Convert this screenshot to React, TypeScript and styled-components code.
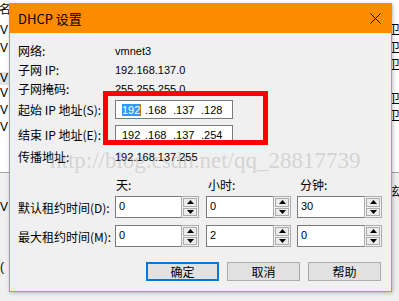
import React from "react"
import styled, { createGlobalStyle } from "styled-components"

const GlobalStyle = createGlobalStyle`
  html, body {
    margin: 0;
    padding: 0;
    background: #ffffff;
  }
  body {
    font-family: "Noto Sans CJK SC", "Liberation Sans", sans-serif;
    font-size: 12px;
    color: #000000;
  }
`

const Desktop = styled.div`
  position: relative;
  width: 399px;
  height: 301px;
  overflow: hidden;
  background: #f0f0f0;
  display: flex;
  flex-direction: column;
`

const BgTop = styled.div`
  height: 172px;
  background: #ffffff;
  border-bottom: 1px solid #a0a0a0;
  display: flex;
  justify-content: space-between;
`

const BgColumn = styled.div`
  width: 9px;
  display: flex;
  flex-direction: column;
  font-family: "Liberation Sans", "Noto Sans CJK SC", sans-serif;
  font-size: 12px;
  overflow: hidden;
`

const BgCell = styled.div<{ $h: number; $shade?: boolean; $shift?: number }>`
  height: ${(p) => p.$h}px;
  line-height: ${(p) => p.$h}px;
  background: ${(p) => (p.$shade ? "#e5e5e5" : "transparent")};
  white-space: nowrap;
  text-indent: ${(p) => p.$shift ?? 0}px;
`

const BgBottom = styled.div`
  flex: 1;
  display: flex;
  justify-content: space-between;
`

const Dialog = styled.div`
  position: absolute;
  left: 9px;
  top: 3px;
  width: 383px;
  height: 289px;
  box-sizing: border-box;
  border: 1px solid #ff8c00;
  border-top: none;
  background: #f0f0f0;
  box-shadow: 1px 1px 4px rgba(0, 0, 0, 0.25);
  display: flex;
  flex-direction: column;
`

const TitleBar = styled.div`
  height: 30px;
  margin: 0 -1px;
  background: #ff8c00;
  display: flex;
  align-items: center;
  justify-content: space-between;
  padding: 0 11px 0 9px;
`

const Title = styled.span`
  font-size: 13px;
  line-height: 30px;
  padding-top: 1px;
`

const Body = styled.div`
  position: relative;
  flex: 1;
  padding: 8px 10px 0 8px;
  display: flex;
  flex-direction: column;
`

const Row = styled.div<{ $h: number; $top?: number }>`
  height: ${(p) => p.$h}px;
  margin-top: ${(p) => p.$top ?? 0}px;
  display: flex;
  align-items: center;
`

const Label = styled.span`
  width: 97px;
  flex: none;
  white-space: nowrap;
  font-size: 12px;
`

const Value = styled.span`
  font-family: "Liberation Sans", sans-serif;
  font-size: 11px;
`

const IpBox = styled.div`
  width: 118px;
  height: 19px;
  box-sizing: border-box;
  border: 1px solid #7a7a7a;
  background: #ffffff;
  display: flex;
  align-items: center;
  padding-left: 6px;
  font-family: "Liberation Sans", sans-serif;
  font-size: 11px;
`

const IpPart = styled.span<{ $w: number }>`
  width: ${(p) => p.$w}px;
  flex: none;
  display: flex;
  align-items: center;
`

const Selected = styled.span`
  background: #3399ff;
  color: #ffffff;
  height: 12px;
  line-height: 12px;
  border-right: 1px solid #c87a1e;
`

const HeadCell = styled.span<{ $w: number }>`
  width: ${(p) => p.$w}px;
  flex: none;
  padding-left: 1px;
`

const Spin = styled.div<{ $w: number }>`
  width: ${(p) => p.$w}px;
  flex: none;
  height: 100%;
  display: flex;
`

const SpinField = styled.div`
  flex: 1;
  box-sizing: border-box;
  border: 1px solid #7a7a7a;
  border-right: none;
  background: #ffffff;
  font-family: "Liberation Sans", sans-serif;
  font-size: 11px;
  padding: 3px 0 0 3px;
`

const SpinButtons = styled.div`
  width: 18px;
  box-sizing: border-box;
  border: 1px solid #adadad;
  background: #f0f0f0;
  display: flex;
  flex-direction: column;
  gap: 1px;
  padding: 1px;
`

const SpinButton = styled.div`
  flex: 1;
  box-sizing: border-box;
  border: 1px solid #adadad;
  background: #ececec;
  display: flex;
  align-items: center;
  justify-content: center;
`

const Gap = styled.div<{ $w: number }>`
  width: ${(p) => p.$w}px;
  flex: none;
`

const ButtonRow = styled.div`
  margin-top: 15px;
  height: 19px;
  display: flex;
  justify-content: flex-end;
  gap: 8px;
`

const Button = styled.div<{ $primary?: boolean }>`
  width: 73px;
  box-sizing: border-box;
  border: ${(p) => (p.$primary ? "2px solid #0078d7" : "1px solid #adadad")};
  background: #e1e1e1;
  display: flex;
  align-items: center;
  justify-content: center;
  font-size: 12px;
`

const RedFrame = styled.div`
  position: absolute;
  left: 93px;
  top: 58px;
  width: 165px;
  height: 54px;
  box-sizing: border-box;
  border: 5px solid #ff0000;
  pointer-events: none;
`

const Watermark = styled.div`
  position: absolute;
  left: 40px;
  top: 115px;
  font-family: "Liberation Serif", serif;
  font-size: 23px;
  color: rgba(140, 140, 140, 0.3);
  white-space: nowrap;
  pointer-events: none;
`

const Arrow: React.FC<{ up?: boolean }> = ({ up }) => (
  <svg width="7" height="4" viewBox="0 0 7 4">
    <path d={up ? "M0 4 L3.5 0 L7 4 Z" : "M0 0 L3.5 4 L7 0 Z"} fill="#000" />
  </svg>
)

const SpinBox: React.FC<{ value: string; w: number }> = ({ value, w }) => (
  <Spin $w={w}>
    <SpinField>{value}</SpinField>
    <SpinButtons>
      <SpinButton>
        <Arrow up />
      </SpinButton>
      <SpinButton>
        <Arrow />
      </SpinButton>
    </SpinButtons>
  </Spin>
)

const leftBg = [
  { h: 20, t: "名", shift: -1 },
  { h: 20, t: "V" },
  { h: 17, t: "V" },
  { h: 15, t: "" },
  { h: 13, t: "V", shade: true },
  { h: 17, t: "V" },
  { h: 17, t: "V" },
  { h: 17, t: "V" },
]

const rightBg = [
  { h: 20, t: "H", shift: -6 },
  { h: 20, t: "卫", shift: -2 },
  { h: 17, t: "卫", shift: -2 },
  { h: 17, t: "卫", shift: -2 },
  { h: 17, t: "" },
  { h: 17, t: "卫", shift: -2 },
  { h: 17, t: "卫", shift: -2 },
]

export default function App() {
  return (
    <>
      <GlobalStyle />
      <Desktop>
        <BgTop>
          <BgColumn>
            {leftBg.map((r, i) => (
              <BgCell key={i} $h={r.h} $shade={r.shade} $shift={r.shift}>
                {r.t}
              </BgCell>
            ))}
          </BgColumn>
          <BgColumn>
            {rightBg.map((r, i) => (
              <BgCell key={i} $h={r.h} $shift={r.shift}>
                {r.t}
              </BgCell>
            ))}
          </BgColumn>
        </BgTop>
        <BgBottom>
          <BgColumn>
            <BgCell $h={24} />
            <BgCell $h={20}>V</BgCell>
            <BgCell $h={40} />
            <BgCell $h={20}>(</BgCell>
          </BgColumn>
          <BgColumn>
            <BgCell $h={8} />
            <BgCell $h={22} $shift={-2}>
              泫
            </BgCell>
          </BgColumn>
        </BgBottom>

        <Dialog>
          <TitleBar>
            <Title>DHCP 设置</Title>
            <svg width="11" height="11" viewBox="0 0 11 11">
              <path d="M0.5 0.5 L10.5 10.5 M10.5 0.5 L0.5 10.5" stroke="#000" strokeWidth="1" />
            </svg>
          </TitleBar>
          <Body>
            <Row $h={19}>
              <Label>网络:</Label>
              <Value>vmnet3</Value>
            </Row>
            <Row $h={19}>
              <Label>子网 IP:</Label>
              <Value>192.168.137.0</Value>
            </Row>
            <Row $h={19}>
              <Label>子网掩码:</Label>
              <Value>255.255.255.0</Value>
            </Row>
            <Row $h={19} $top={2}>
              <Label>起始 IP 地址(S):</Label>
              <IpBox>
                <IpPart $w={23}>
                  <Selected>192</Selected>
                </IpPart>
                <IpPart $w={28}>.168</IpPart>
                <IpPart $w={28}>.137</IpPart>
                <IpPart $w={28}>.128</IpPart>
              </IpBox>
            </Row>
            <Row $h={19} $top={6}>
              <Label>结束 IP 地址(E):</Label>
              <IpBox>
                <IpPart $w={23}>192</IpPart>
                <IpPart $w={28}>.168</IpPart>
                <IpPart $w={28}>.137</IpPart>
                <IpPart $w={28}>.254</IpPart>
              </IpBox>
            </Row>
            <Row $h={19} $top={3}>
              <Label>传播地址:</Label>
              <Value>192.168.137.255</Value>
            </Row>
            <Row $h={18} $top={9}>
              <Label />
              <HeadCell $w={91}>天:</HeadCell>
              <HeadCell $w={91}>小时:</HeadCell>
              <HeadCell $w={85}>分钟:</HeadCell>
            </Row>
            <Row $h={22} $top={3}>
              <Label>默认租约时间(D):</Label>
              <SpinBox value="0" w={84} />
              <Gap $w={7} />
              <SpinBox value="0" w={85} />
              <Gap $w={6} />
              <SpinBox value="30" w={85} />
            </Row>
            <Row $h={22} $top={7}>
              <Label>最大租约时间(M):</Label>
              <SpinBox value="0" w={84} />
              <Gap $w={7} />
              <SpinBox value="2" w={85} />
              <Gap $w={6} />
              <SpinBox value="0" w={85} />
            </Row>
            <ButtonRow>
              <Button $primary>确定</Button>
              <Button>取消</Button>
              <Button>帮助</Button>
            </ButtonRow>
            <RedFrame />
            <Watermark>http://blog.csdn.net/qq_28817739</Watermark>
          </Body>
        </Dialog>
      </Desktop>
    </>
  )
}
